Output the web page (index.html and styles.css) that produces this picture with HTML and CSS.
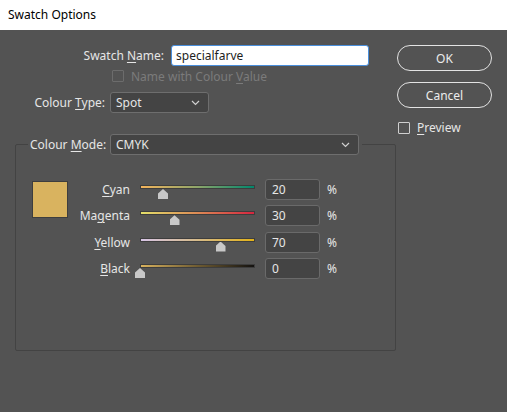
FILE: index.html
```html
<!DOCTYPE html>
<html lang="en">
<head>
    <meta charset="UTF-8">
    <title>Swatch Options</title>
    <link rel="stylesheet" href="styles.css">
</head>
<body>
    <div class="titlebar">Swatch Options</div>

    <div class="dialog">
        <div class="main">
            <div class="row name-row">
                <label class="name-label">Swatch <u>N</u>ame:</label>
                <div class="text-input">specialfarve</div>
            </div>

            <div class="row check-row disabled">
                <span class="checkbox"></span>
                <span>Name with Colour <u>V</u>alue</span>
            </div>

            <div class="row type-row">
                <label class="type-label">Colour <u>T</u>ype:</label>
                <div class="select type-select">
                    <span>Spot</span>
                    <svg class="chevron" width="9" height="6" viewBox="0 0 9 6"><polyline points="1,1 4.5,4.5 8,1" fill="none" stroke="#d0d0d0" stroke-width="1.2"/></svg>
                </div>
            </div>

            <fieldset class="group">
                <legend class="group-head">
                    <label>Colour <u>M</u>ode:</label>
                    <div class="select mode-select">
                        <span>CMYK</span>
                        <svg class="chevron" width="9" height="6" viewBox="0 0 9 6"><polyline points="1,1 4.5,4.5 8,1" fill="none" stroke="#d0d0d0" stroke-width="1.2"/></svg>
                    </div>
                </legend>

                <div class="group-body">
                    <div class="swatch"></div>
                    <div class="sliders">
                        <div class="slider-row">
                            <span class="slider-label"><u>C</u>yan</span>
                            <div class="slider">
                                <div class="track cyan"></div>
                                <div class="thumb" style="left: 20%"></div>
                            </div>
                            <div class="num">20</div>
                            <span class="pct">%</span>
                        </div>
                        <div class="slider-row">
                            <span class="slider-label">Ma<u>g</u>enta</span>
                            <div class="slider">
                                <div class="track magenta"></div>
                                <div class="thumb" style="left: 30%"></div>
                            </div>
                            <div class="num">30</div>
                            <span class="pct">%</span>
                        </div>
                        <div class="slider-row">
                            <span class="slider-label"><u>Y</u>ellow</span>
                            <div class="slider">
                                <div class="track yellow"></div>
                                <div class="thumb" style="left: 70%"></div>
                            </div>
                            <div class="num">70</div>
                            <span class="pct">%</span>
                        </div>
                        <div class="slider-row">
                            <span class="slider-label"><u>B</u>lack</span>
                            <div class="slider">
                                <div class="track black"></div>
                                <div class="thumb" style="left: 0%"></div>
                            </div>
                            <div class="num">0</div>
                            <span class="pct">%</span>
                        </div>
                    </div>
                </div>
            </fieldset>
        </div>

        <div class="side">
            <button class="btn">OK</button>
            <button class="btn">Cancel</button>
            <div class="row preview-row">
                <span class="checkbox"></span>
                <span><u>P</u>review</span>
            </div>
        </div>
    </div>
</body>
</html>
```

FILE: styles.css
```css
body {
    margin: 0;
    width: 507px;
    height: 412px;
    overflow: hidden;
    background-color: #535353;
    font-family: "Noto Sans", "Open Sans", sans-serif;
    font-size: 12px;
    color: #e6e6e6;
}

u {
    text-decoration-thickness: 1px;
    text-underline-offset: 2px;
}

.titlebar {
    height: 30px;
    line-height: 30px;
    padding-left: 8px;
    background-color: white;
    color: black;
}

.dialog {
    display: flex;
    padding: 15px 0 0 15px;
}

.main {
    width: 381px;
}

.row {
    display: flex;
    align-items: center;
    white-space: nowrap;
}

.name-row {
    height: 21px;
}

.name-label {
    width: 149px;
    text-align: right;
    margin-right: 7px;
}

.text-input {
    width: 198px;
    height: 21px;
    box-sizing: border-box;
    padding-left: 4px;
    line-height: 19px;
    background-color: white;
    color: #1e1e1e;
    border: 1px solid #4a8fdc;
    border-radius: 3px;
}

.check-row {
    margin: 4px 0 0 97px;
    height: 12px;
}

.disabled {
    color: #7b7b7b;
}

.checkbox {
    width: 12px;
    height: 12px;
    flex-shrink: 0;
    box-sizing: border-box;
    border: 1px solid #cfcfcf;
    border-radius: 1px;
    margin-right: 7px;
}

.disabled .checkbox {
    border-color: #6c6c6c;
}

.type-row {
    margin-top: 10px;
    height: 21px;
}

.type-label {
    width: 90px;
    text-align: right;
    margin-right: 5px;
}

.select {
    height: 21px;
    box-sizing: border-box;
    display: flex;
    align-items: center;
    justify-content: space-between;
    padding: 0 8px 0 5px;
    background-color: #444444;
    border: 1px solid #6e6e6e;
    border-radius: 3px;
}

.type-select {
    width: 99px;
}

.mode-select {
    width: 249px;
    flex-shrink: 0;
}

.group {
    margin: 21px 0 0 0;
    padding: 0 0 71px 16px;
    border: 1px solid #434343;
    border-radius: 2px;
}

.group-head {
    display: flex;
    align-items: center;
    white-space: nowrap;
    padding: 0 3px 0 2px;
    margin-left: -4px;
}

.group-head label {
    width: 73px;
    flex-shrink: 0;
    margin-right: 7px;
}

.group-body {
    display: flex;
    align-items: flex-start;
    margin-top: 24px;
}

.swatch {
    width: 36px;
    height: 37px;
    box-sizing: border-box;
    margin-top: 2px;
    background-color: #d9b35f;
    border: 1px solid #3e3e3e;
}

.sliders {
    display: flex;
    flex-direction: column;
    gap: 5.3px;
}

.slider-row {
    display: flex;
    align-items: center;
    height: 21px;
}

.slider-label {
    width: 62px;
    text-align: right;
}

.slider {
    position: relative;
    width: 115px;
    height: 21px;
    margin-left: 10px;
}

.track {
    margin-top: 6px;
    height: 4px;
    box-sizing: border-box;
    border: 1px solid #3d3d3d;
}

.cyan { background: linear-gradient(to right, #f4b45c, #8ea56a, #00876c); }
.magenta { background: linear-gradient(to right, #e3df6a, #dc8a55, #d5253f); }
.yellow { background: linear-gradient(to right, #d7c5e6, #d6bb8a, #e3b218); }
.black { background: linear-gradient(to right, #d8b25e, #6f5c32, #141210); }

.thumb {
    position: absolute;
    top: 10px;
    width: 10px;
    height: 10px;
    margin-left: -5px;
    background-color: #c8c8c8;
    clip-path: polygon(50% 0, 100% 45%, 100% 100%, 0 100%, 0 45%);
}

.num {
    width: 55px;
    height: 21px;
    box-sizing: border-box;
    margin-left: 10px;
    padding-left: 6px;
    line-height: 19px;
    background-color: #444444;
    border: 1px solid #6a6a6a;
    border-radius: 3px;
}

.pct {
    margin-left: 7px;
}

.side {
    display: flex;
    flex-direction: column;
    align-items: flex-start;
    margin-left: 1px;
}

.btn {
    width: 95px;
    height: 26px;
    margin-bottom: 11px;
    background: transparent;
    color: #ececec;
    font: inherit;
    border: 1.5px solid #e3e3e3;
    border-radius: 13px;
}

.preview-row {
    margin: 0 0 0 1px;
}
```
